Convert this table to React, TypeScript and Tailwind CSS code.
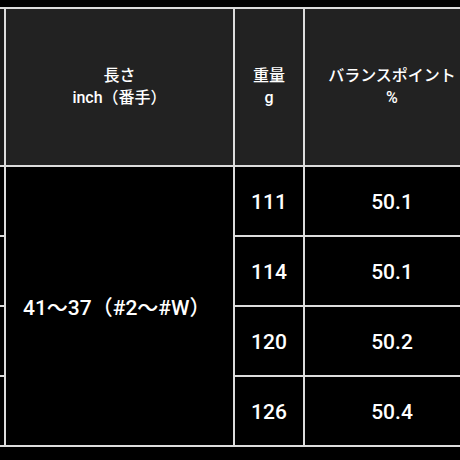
const rows = [
  { weight: "111", balance: "50.1" },
  { weight: "114", balance: "50.1" },
  { weight: "120", balance: "50.2" },
  { weight: "126", balance: "50.4" },
];

const font = { fontFamily: 'Roboto, "Noto Sans CJK JP", sans-serif' };

export default function App() {
  return (
    <div className="h-[460px] w-[460px] overflow-hidden bg-black pt-[7px] text-white" style={font}>
      <div className="grid w-[479px] grid-cols-[4px_227px_68px_174px] grid-rows-[156px_68px_68px_68px_68px] gap-[2px] bg-[#dcdcdc] py-[2px]">
        {/* header */}
        <div className="bg-[#1a1a1a]"></div>
        <div className="flex flex-col items-center justify-center bg-[#222222] text-[16px] leading-[22px] font-medium">
          <span>長さ</span>
          <span>inch（番手）</span>
        </div>
        <div className="flex flex-col items-center justify-center bg-[#222222] text-[16px] leading-[22px] font-medium">
          <span>重量</span>
          <span>g</span>
        </div>
        <div className="flex flex-col items-center justify-center bg-[#222222] text-[16px] leading-[22px] font-medium">
          <span>バランスポイント</span>
          <span>%</span>
        </div>

        {/* body */}
        {rows.map((r, i) => (
          <div key={r.weight} className="contents">
            <div className="bg-black"></div>
            {i === 0 && (
              <div className="row-span-4 flex items-center bg-black pl-[17px] pt-[6px] text-[21px] font-medium">
                41～37（#2～#W）
              </div>
            )}
            <div className="flex items-center justify-center bg-black pt-[4px] text-[21px] font-medium">{r.weight}</div>
            <div className="flex items-center justify-center bg-black pt-[4px] text-[21px] font-medium">{r.balance}</div>
          </div>
        ))}
      </div>
    </div>
  );
}
